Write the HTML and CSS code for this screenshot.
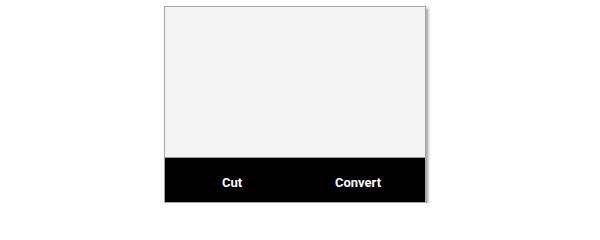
FILE: index.html
```html
<!DOCTYPE html>
<html>
<head>
<meta charset="utf-8">
<link rel="stylesheet" href="styles.css">
</head>
<body>
<div class="frame">
  <div class="canvas"></div>
  <div class="toolbar">
    <div class="action">Cut</div>
    <div class="action">Convert</div>
  </div>
</div>
</body>
</html>
```

FILE: styles.css
```css
html, body {
  margin: 0;
  padding: 0;
  background: #ffffff;
}
body {
  padding-top: 6px;
  display: flex;
  justify-content: center;
  font-family: Roboto, "Liberation Sans", sans-serif;
}
.frame {
  margin-left: -10px;
  width: 260px;
  height: 195px;
  border: 1px solid #a9a9a9;
  background: #f3f3f3;
  box-shadow: 2px 2px 3px rgba(0, 0, 0, 0.4);
  display: flex;
  flex-direction: column;
}
.canvas {
  flex: 1;
  border-bottom: 1px solid #9a9a9a;
}
.toolbar {
  height: 44px;
  background: #000000;
  display: flex;
  align-items: center;
  padding: 4px 4px 0 4px;
  box-sizing: border-box;
}
.action {
  flex: 1;
  text-align: center;
  color: #ffffff;
  font-weight: 700;
  font-size: 13px;
}
```
